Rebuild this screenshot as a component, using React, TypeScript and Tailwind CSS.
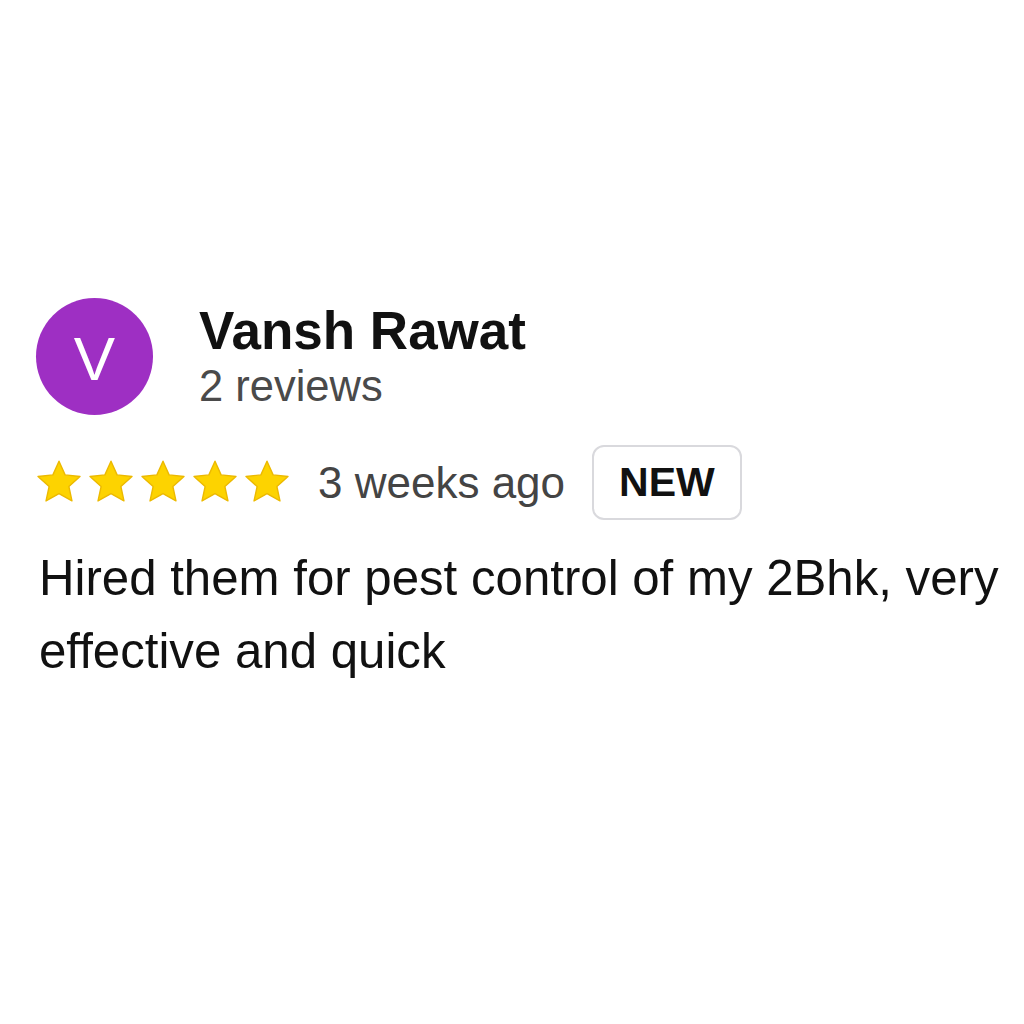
import React from "react";

const Star = () => (
  <svg viewBox="0 0 100 92" className="w-[46px] h-[44px]" aria-hidden="true">
    <polygon
      points="50,3 63.26,32.75 95.65,36.17 71.46,57.97 78.21,89.3 50,73.56 21.79,89.3 28.54,57.97 4.35,36.17 36.74,32.75"
      fill="#fdd300"
      stroke="#ecb900"
      strokeWidth="3"
      strokeLinejoin="round"
    />
  </svg>
);

export default function App() {
  return (
    <div
      className="min-h-[1024px] w-[1024px] bg-white pl-[36px] pt-[298px]"
      style={{ fontFamily: '"Liberation Sans", Arial, sans-serif' }}
    >
      <div className="flex items-start gap-[46px]">
        <div className="flex h-[117px] w-[117px] items-center justify-center rounded-full bg-[#9e2fc3] pt-[5px] text-[62px] leading-none text-white">
          V
        </div>
        <div className="flex flex-col pt-[5px]">
          <div className="text-[53px] font-bold leading-[56px] text-[#111111]">Vansh Rawat</div>
          <div className="mt-[3px] text-[43.5px] leading-[48px] text-[#4a4a4a]">2 reviews</div>
        </div>
      </div>

      <div className="mt-[30px] flex items-center">
        <div className="mb-[3px] flex items-center gap-[6px]">
          <Star />
          <Star />
          <Star />
          <Star />
          <Star />
        </div>
        <div className="ml-[28px] text-[44px] leading-none text-[#444444]">3 weeks ago</div>
        <div className="ml-[27px] flex h-[75px] items-center rounded-[12px] border-2 border-[#d9d9dd] px-[25px] text-[41px] font-bold leading-none text-[#111111]">
          NEW
        </div>
      </div>

      <p className="mt-[21px] w-[980px] pl-[3px] text-[49.2px] leading-[73px] text-[#111111]">
        Hired them for pest control of my 2Bhk, very effective and quick
      </p>
    </div>
  );
}
